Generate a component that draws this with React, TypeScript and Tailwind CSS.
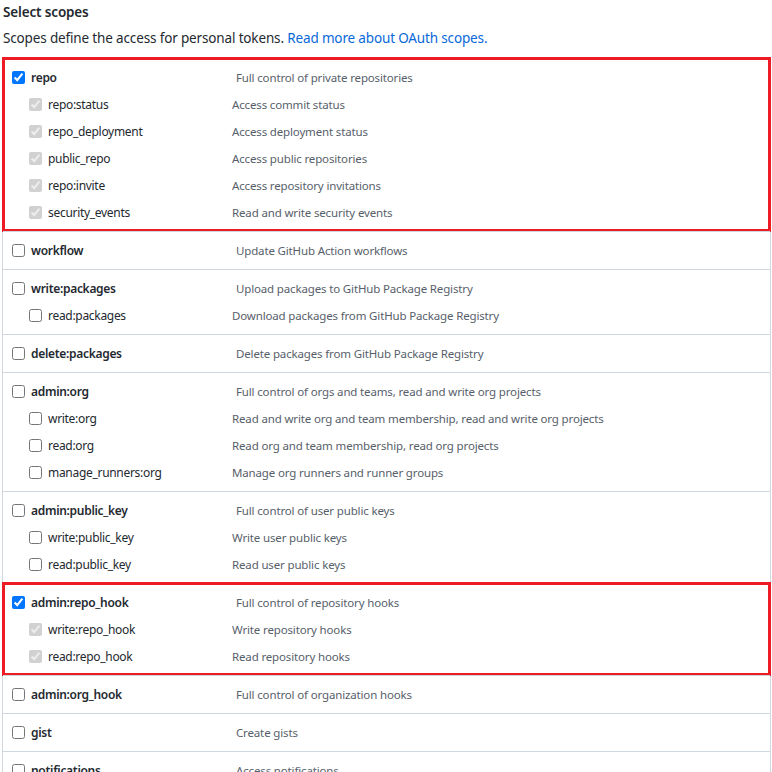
import React from 'react';

type Scope = { name: string; desc: string; checked?: boolean };
type Group = { top: Scope; subs: Scope[]; marked?: boolean };

const groups: Group[] = [
  {
    top: { name: 'repo', desc: 'Full control of private repositories', checked: true },
    subs: [
      { name: 'repo:status', desc: 'Access commit status', checked: true },
      { name: 'repo_deployment', desc: 'Access deployment status', checked: true },
      { name: 'public_repo', desc: 'Access public repositories', checked: true },
      { name: 'repo:invite', desc: 'Access repository invitations', checked: true },
      { name: 'security_events', desc: 'Read and write security events', checked: true },
    ],
    marked: true,
  },
  { top: { name: 'workflow', desc: 'Update GitHub Action workflows' }, subs: [] },
  {
    top: { name: 'write:packages', desc: 'Upload packages to GitHub Package Registry' },
    subs: [{ name: 'read:packages', desc: 'Download packages from GitHub Package Registry' }],
  },
  { top: { name: 'delete:packages', desc: 'Delete packages from GitHub Package Registry' }, subs: [] },
  {
    top: { name: 'admin:org', desc: 'Full control of orgs and teams, read and write org projects' },
    subs: [
      { name: 'write:org', desc: 'Read and write org and team membership, read and write org projects' },
      { name: 'read:org', desc: 'Read org and team membership, read org projects' },
      { name: 'manage_runners:org', desc: 'Manage org runners and runner groups' },
    ],
  },
  {
    top: { name: 'admin:public_key', desc: 'Full control of user public keys' },
    subs: [
      { name: 'write:public_key', desc: 'Write user public keys' },
      { name: 'read:public_key', desc: 'Read user public keys' },
    ],
  },
  {
    top: { name: 'admin:repo_hook', desc: 'Full control of repository hooks', checked: true },
    subs: [
      { name: 'write:repo_hook', desc: 'Write repository hooks', checked: true },
      { name: 'read:repo_hook', desc: 'Read repository hooks', checked: true },
    ],
    marked: true,
  },
  { top: { name: 'admin:org_hook', desc: 'Full control of organization hooks' }, subs: [] },
  { top: { name: 'gist', desc: 'Create gists' }, subs: [] },
  { top: { name: 'notifications', desc: 'Access notifications' }, subs: [] },
];

function Row({ scope, sub, parentChecked }: { scope: Scope; sub?: boolean; parentChecked?: boolean }) {
  return (
    <div className="flex h-[27px] items-center">
      <label className={`flex w-[229px] shrink-0 items-center gap-[6px] ${sub ? 'pl-[26px]' : 'pl-[9px]'}`}>
        <input
          type="checkbox"
          readOnly
          checked={!!scope.checked}
          disabled={sub && parentChecked}
          className="h-[13px] w-[13px] accent-[#0075ff]"
        />
        <span className={`text-[12px] tracking-[-0.3px] text-[#24292f] ${sub ? '' : 'font-semibold'}`}>
          {scope.name}
        </span>
      </label>
      <span className={`whitespace-nowrap text-[11.5px] tracking-[-0.15px] text-[#57606a] ${sub ? '' : 'pl-[4px]'}`}>
        {scope.desc}
      </span>
    </div>
  );
}

export default function App() {
  return (
    <div className="h-[772px] overflow-hidden bg-white" style={{ fontFamily: '"Noto Sans", "Open Sans", sans-serif' }}>
      <div className="px-[3px] pt-[1px] tracking-[-0.15px]">
        <h3 className="text-[13.5px] font-semibold leading-[22px] text-[#24292f]">Select scopes</h3>
        <p className="mt-[4px] text-[13.5px] leading-[22px] text-[#24292f]">
          Scopes define the access for personal tokens.{' '}
          <a className="text-[#0969da]">Read more about OAuth scopes.</a>
        </p>
      </div>

      <div className="ml-[2px] mt-[9px] w-[769px] border-x border-[#d0d7de]">
        {groups.map((g) => (
          <div key={g.top.name} className="relative border-t border-[#d0d7de] py-[5px]">
            <Row scope={g.top} />
            {g.subs.map((s) => (
              <Row key={s.name} scope={s} sub parentChecked={g.top.checked} />
            ))}
            {g.marked && (
              <div className="pointer-events-none absolute -top-[2px] -bottom-[1px] -left-[1px] -right-[1px] border-[3px] border-[#ed1c24]" />
            )}
          </div>
        ))}
      </div>
    </div>
  );
}
